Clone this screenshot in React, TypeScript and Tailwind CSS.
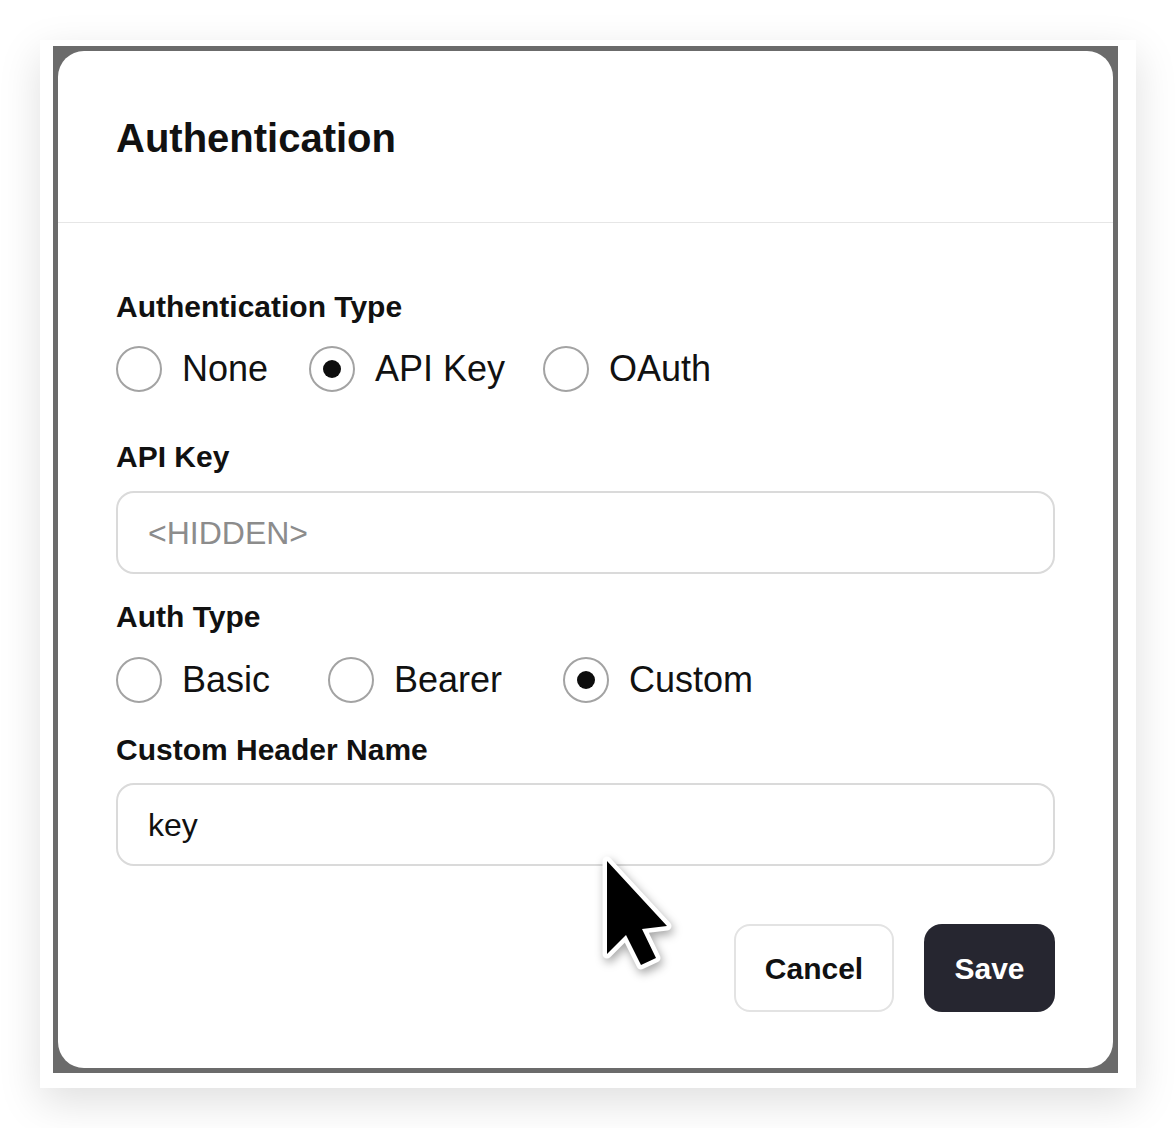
import React from "react";

const font = { fontFamily: '"Liberation Sans", Arial, sans-serif' };

function Radio({ label, checked, width }: { label: string; checked?: boolean; width: string }) {
  return (
    <div className={`flex items-center ${width}`}>
      <div className="w-[46px] h-[46px] rounded-full border-[2px] border-[#a3a3a3] flex items-center justify-center shrink-0 bg-white">
        {checked && <div className="w-[18px] h-[18px] rounded-full bg-[#0d0d0d]" />}
      </div>
      <span className="ml-[20px] text-[36px] leading-[46px] text-[#111111] whitespace-nowrap">{label}</span>
    </div>
  );
}

function Label({ children, className = "" }: { children: React.ReactNode; className?: string }) {
  return <div className={`text-[30px] leading-[36px] font-bold text-[#111111] ${className}`}>{children}</div>;
}

export default function App() {
  return (
    <div className="w-[1176px] h-[1128px] bg-white pt-[40px] pl-[40px]" style={font}>
      <div className="w-[1096px] h-[1048px] bg-white shadow-[0_14px_40px_rgba(0,0,0,0.13)] pt-[6px] pl-[13px]">
        <div className="w-[1065px] h-[1027px] bg-[#6b6b6b] p-[5px]">
          <div className="relative w-[1055px] h-[1017px] bg-white rounded-[26px] overflow-hidden">
            <div className="h-[172px] flex items-center px-[58px] pt-[2px] border-b border-[#e6e6e6]">
              <h1 className="text-[40px] leading-[48px] font-bold text-[#111111]">Authentication</h1>
            </div>
            <div className="px-[58px] pt-[66px] flex flex-col">
              <Label>Authentication Type</Label>
              <div className="flex mt-[21px]">
                <Radio label="None" width="w-[193px]" />
                <Radio label="API Key" checked width="w-[234px]" />
                <Radio label="OAuth" width="w-[200px]" />
              </div>
              <Label className="mt-[47px]">API Key</Label>
              <div className="mt-[16px] h-[83px] rounded-[18px] border-[2px] border-[#dadada] flex items-center px-[30px]">
                <span className="text-[32px] text-[#8c8c8c]">&lt;HIDDEN&gt;</span>
              </div>
              <Label className="mt-[25px]">Auth Type</Label>
              <div className="flex mt-[22px]">
                <Radio label="Basic" width="w-[212px]" />
                <Radio label="Bearer" width="w-[235px]" />
                <Radio label="Custom" checked width="w-[220px]" />
              </div>
              <Label className="mt-[29px]">Custom Header Name</Label>
              <div className="mt-[15px] h-[83px] rounded-[18px] border-[2px] border-[#dadada] flex items-center px-[30px]">
                <span className="text-[32px] text-[#111111]">key</span>
              </div>
              <div className="mt-[58px] flex justify-end gap-[30px]">
                <button className="w-[160px] h-[88px] rounded-[16px] border-[2px] border-[#e3e3e3] bg-white text-[30px] font-bold text-[#111111]">
                  Cancel
                </button>
                <button className="w-[131px] h-[88px] rounded-[18px] bg-[#262630] text-[30px] font-bold text-white">
                  Save
                </button>
              </div>
            </div>
            <svg
              className="absolute left-[532px] top-[790px] pointer-events-none"
              width="100"
              height="150"
              viewBox="0 0 100 150"
              style={{ filter: "drop-shadow(2px 4px 5px rgba(0,0,0,0.35))" }}
            >
              <path
                d="M17 20 L17 113 L36 94 L51 124 L66 117 L52 88 L77 85 Z"
                fill="#000"
                stroke="#fff"
                strokeWidth="9"
                strokeLinejoin="round"
                paintOrder="stroke"
              />
            </svg>
          </div>
        </div>
      </div>
    </div>
  );
}
